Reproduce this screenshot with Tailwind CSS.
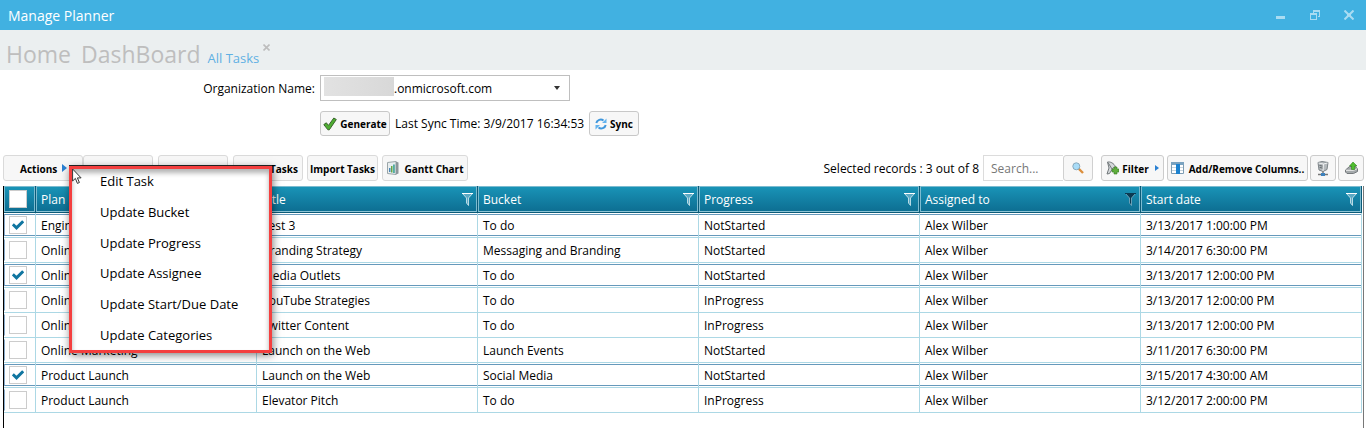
<!DOCTYPE html>
<html lang="en">
<head>
<meta charset="utf-8">
<title>Manage Planner</title>
<script src="https://cdn.jsdelivr.net/npm/@tailwindcss/browser@4"></script>
</head>
<body class="min-h-screen flex flex-col bg-white font-['Open_Sans','Noto_Sans',sans-serif] text-[12px] leading-4 text-black overflow-hidden">
<header class="h-[30px] shrink-0 bg-[#41b1e1] flex items-center justify-between pl-2 pr-3">
  <h1 class="text-[14px] leading-5 text-white pt-px">Manage Planner</h1>
  <div class="flex gap-6 text-[#a9dcf2]">
    <button type="button" aria-label="Minimize" class="size-[10px]"><svg class="size-[10px]" viewBox="0 0 10 10" fill="currentColor" shape-rendering="crispEdges"><path d="M0 6h9v3H0z"/></svg></button>
    <button type="button" aria-label="Restore" class="size-[10px]"><svg class="size-[10px]" viewBox="0 0 10 10" fill="currentColor" fill-rule="evenodd" shape-rendering="crispEdges"><path d="M0 3h7v7H0zM1 5v4h5V5zM3 0h7v7H8V6h1V2H4v1H3z"/></svg></button>
    <button type="button" aria-label="Close" class="size-[10px]"><svg class="size-[10px]" viewBox="0 0 10 10" stroke="currentColor" stroke-width="2"><path d="M.5.5l9 9M9.500.5l-9 9"/><path d="M3 5h4" stroke-width="3"/></svg></button>
  </div>
</header>
<nav class="h-10 shrink-0 bg-[#ebeff0] flex items-baseline px-[6px] pt-[7px] text-[#bebebe]">
  <a href="#" class="text-[23px] leading-[34px] mr-[10px]">Home</a>
  <a href="#" class="text-[23px] leading-[34px] mr-[7px]">DashBoard</a>
  <a href="#" class="text-[13px] text-[#5fb0e3]">All Tasks</a>
  <button type="button" aria-label="Close tab" class="self-start ml-1 mt-[7px] size-[7px]"><svg class="size-[7px]" viewBox="0 0 7 7" stroke="#bdbdbd" stroke-width="1.600"><path d="M.5.5l6 6M6.500.5l-6 6"/></svg></button>
</nav>
<main class="flex-1 flex flex-col">
  <form class="pl-[320px] pt-[5px]">
    <div class="flex items-center">
      <label for="org" class="w-[320px] -ml-[320px] pr-[5px] pt-[2px] text-right">Organization Name:</label>
      <div class="relative w-[250px]">
        <select id="org" class="appearance-none block w-full h-[26px] border border-[#bfbfbf] bg-white pt-[2px] pl-[73px] text-[12px]"><option>.onmicrosoft.com</option></select>
        <span class="absolute left-1 top-[2px] w-[70px] h-[19px] bg-linear-to-r from-[#e2e2e2] to-[#d8d8d8]"></span>
        <svg class="absolute right-[10px] top-[11px] w-[6px] h-[4px] pointer-events-none" viewBox="0 0 6 4" fill="#333"><path d="M0 0h6L3 4z"/></svg>
      </div>
    </div>
    <div class="flex items-center mt-[10px]">
      <button type="button" class="h-[25px] w-[70px] border border-[#c8c8c8] rounded-[3px] bg-[#f7f7f7] flex items-center justify-center gap-[3px] font-bold text-[10px]">
        <svg class="size-[14px] shrink-0" viewBox="0 0 14 14"><path d="M.8 7.600L3.300 5.800l2.200 2.600L10.800 1l2.500 1.500-7 10.300H4.900z" fill="#4fae32" stroke="#39642c" stroke-width="1"/></svg><span class="pt-px">Generate</span></button>
      <span class="w-[189px] mx-[5px] pt-px whitespace-nowrap">Last Sync Time: 3/9/2017 16:34:53</span>
      <button type="button" class="h-[25px] w-[50px] border border-[#c8c8c8] rounded-[3px] bg-[#f7f7f7] flex items-center justify-center gap-[3px] font-bold text-[10px]">
        <svg class="size-3 shrink-0" viewBox="0 0 12 12" fill="none" stroke="#3f97dd" stroke-width="2"><path d="M1.300 5A4.500 4.300 0 0 1 8.500 2.500"/><path d="M10.700 7A4.500 4.300 0 0 1 3.500 9.500"/><path d="M11.500.5v4.500H7z M.5 11.500V7H5z" fill="#63b3ee" stroke="none"/></svg><span class="pt-px">Sync</span></button>
    </div>
  </form>
  <section class="relative flex-1 flex flex-col mt-[19px]">
    <div class="flex items-center h-[26px] pl-[3px] pr-[2px] font-bold text-[10px]">
      <button type="button" aria-haspopup="menu" class="h-[26px] w-[80px] border border-[#dadada] rounded-[3px] bg-[#f7f7f7] flex items-center pl-4 gap-[5px]"><span class="pt-px">Actions</span><svg class="w-[5px] h-[8px]" viewBox="0 0 5 8" fill="#2a80d2"><path d="M0 0l5 4-5 4z"/></svg></button>
      <button type="button" aria-label="Add" class="h-[26px] w-[70px] border border-[#dadada] rounded-[3px] bg-[#f7f7f7]"></button>
      <button type="button" aria-label="Refresh" class="h-[26px] w-[70px] ml-[5px] border border-[#dadada] rounded-[3px] bg-[#f7f7f7]"></button>
      <button type="button" class="h-[26px] w-[70px] ml-[5px] border border-[#dadada] rounded-[3px] bg-[#f7f7f7] pt-px pr-1 text-right whitespace-nowrap">Export Tasks</button>
      <button type="button" class="h-[26px] w-[71px] ml-1 border border-[#dadada] rounded-[3px] bg-[#f7f7f7] pt-px whitespace-nowrap">Import Tasks</button>
      <button type="button" class="h-[26px] w-[86px] ml-1 border border-[#dadada] rounded-[3px] bg-[#f7f7f7] flex items-center justify-center gap-[6px] whitespace-nowrap">
        <svg class="w-3 h-[14px] shrink-0" viewBox="0 0 12 14"><path d="M.5 1.500L9 .5v13l-8.500-1z" fill="#e8eef0" stroke="#9aa5a8"/><path d="M9 .5l2.500 1v11L9 13.500z" fill="#8b9599"/><path d="M2 7h1.500v4H2z" fill="#4b87b8"/><path d="M4 5h1.500v6.500H4z" fill="#6aa544"/><path d="M6.200 3.500h1.500V12H6.200z" fill="#2f9b90"/></svg><span class="pt-px">Gantt Chart</span></button>
      <div class="ml-auto flex items-center">
        <span class="font-normal text-[12px] pt-px mr-1 whitespace-nowrap">Selected records : 3 out of 8</span>
        <input type="search" aria-label="Search" placeholder="Search..." class="h-[26px] w-[80px] border border-r-0 border-[#dcdcdc] px-[7px] font-normal text-[12px] placeholder:text-[#777]">
        <button type="button" aria-label="Search" class="h-[26px] w-[30px] border border-[#d0d0d0] rounded-[3px] bg-[#f7f7f7] flex items-center justify-center"><svg class="size-3" viewBox="0 0 12 12"><path d="M6.500 6.500l4.500 4.500" stroke="#dc8f3c" stroke-width="2.400"/><circle cx="4.300" cy="4.300" r="3.500" fill="#a8dcf8" stroke="#8aa9bc"/></svg></button>
        <button type="button" class="ml-2 h-[26px] w-[63px] border border-[#ccc] rounded-[3px] bg-[#f7f7f7] flex items-center justify-center gap-[3px]">
          <svg class="w-[13px] h-[14px] shrink-0" viewBox="0 0 13 14"><path d="M1.500 1C4 .5 8 2 9.500 6L7 7 3.500 12.500 1 13l2-6z" fill="#d4d8da" stroke="#71777a"/><path d="M2 1.500l4 6.500" stroke="#73797c"/><path d="M8 6h3v2h2v3h-2v2H8v-2H6V8h2z" fill="#5fae3c" stroke="#3b7c25" stroke-width=".6"/></svg><span class="pt-px">Filter</span><svg class="w-[4px] h-[6px] ml-[3px]" viewBox="0 0 4 6" fill="#2a80d2"><path d="M0 0l4 3-4 3z"/></svg></button>
        <button type="button" class="ml-[3px] h-[26px] w-[141px] border border-[#ccc] rounded-[3px] bg-[#f7f7f7] flex items-center justify-center gap-[5px] whitespace-nowrap">
          <svg class="w-[13px] h-3 shrink-0" viewBox="0 0 13 12"><path d="M.5.5h12v11H.5z" fill="#fff" stroke="#7e9db4"/><path d="M0 0h13v3H0z" fill="#7ba3c0"/><path d="M5 2h4v10H5z" fill="#1d82cf"/><path d="M1 5.500h4M9 5.500h3M1 8.500h4M9 8.500h3" stroke="#c7d4dc"/></svg><span class="pt-px">Add/Remove Columns..</span></button>
        <button type="button" aria-label="Server" class="ml-[2px] h-[26px] w-[26px] border border-[#ccc] rounded-[3px] bg-[#f7f7f7] flex items-center justify-center"><svg class="w-3 h-[15px]" viewBox="0 0 12 15"><path d="M1 1.500L5 .5l6 1-1 7-4 2L2 9z" fill="#b4b9bc" stroke="#7d8488"/><path d="M1.500 2l5 1L10.500 2M6.500 3L6 10" stroke="#eef0f1" fill="none"/><path d="M2.500 4.500l3 .6M2.700 6.500l2.800.6" stroke="#5d6468"/><path d="M6 10.500V13M1 13.500h10" stroke="#777" stroke-width="1.500"/><path d="M4 12h4v3H4z" fill="#3e82bd"/></svg></button>
        <button type="button" aria-label="Export" class="ml-[2px] h-[26px] w-[26px] border border-[#ccc] rounded-[3px] bg-[#f7f7f7] flex items-center justify-center"><svg class="w-[13px] h-3" viewBox="0 0 13 12"><path d="M.5 8l4-3.500h6L12.500 7v2.500L8.500 11.500H2L.5 10z" fill="#a3a8aa" stroke="#75797c"/><path d="M1 8.300h7.500l3.500-1.500" stroke="#eee" fill="none"/><path d="M8 0l4 4H9.800v3.500H6.500V4H4.500z" fill="#4fbe2e" stroke="#2f8620" stroke-width=".6"/></svg></button>
      </div>
    </div>
    <div class="flex-1 mt-[5px] ml-[3px] mr-[2px] border-l border-l-black border-r border-r-[#777] pr-px">
      <table class="w-full table-fixed border-separate border-spacing-0">
        <colgroup><col class="w-8"><col><col><col><col><col><col></colgroup>
        <thead><tr id="head"></tr></thead>
        <tbody id="rows"></tbody>
      </table>
    </div>
    <div role="menu" class="absolute left-[69px] top-[11px] w-[203px] h-[187px] border-3 border-[#f43f3f] bg-white flex flex-col text-[13px] shadow-[0_-1px_0_#222,1px_2px_8px_rgba(0,0,0,.5),inset_0_4px_5px_rgba(0,0,0,.3)]">
      <div role="none" class="flex-1 flex flex-col -mt-[3px]">
        <button role="menuitem" type="button" class="flex-1 pl-7 text-left">Edit Task</button>
        <button role="menuitem" type="button" class="flex-1 pl-7 text-left">Update Bucket</button>
        <button role="menuitem" type="button" class="flex-1 pl-7 text-left">Update Progress</button>
        <button role="menuitem" type="button" class="flex-1 pl-7 text-left">Update Assignee</button>
        <button role="menuitem" type="button" class="flex-1 pl-7 text-left">Update Start/Due Date</button>
        <button role="menuitem" type="button" class="flex-1 pl-7 text-left">Update Categories</button>
      </div>
    </div>
    <svg class="absolute left-[72px] top-[13px] w-[10px] h-[17px] pointer-events-none" viewBox="0 0 10 17"><path d="M.6 1v12l2.800-2.600 2 5 2-.9-2-4.600h3.700z" fill="#fff" stroke="#333"/></svg>
  </section>
</main>
<script>
const cols = ['Plan', 'Title', 'Bucket', 'Progress', 'Assigned to', 'Start date'];
const data = [
  [1, 'Engineering', 'Test 3', 'To do', 'NotStarted', '3/13/2017 1:00:00 PM'],
  [0, 'Online Marketing', 'Branding Strategy', 'Messaging and Branding', 'NotStarted', '3/14/2017 6:30:00 PM'],
  [1, 'Online Marketing', 'Media Outlets', 'To do', 'NotStarted', '3/13/2017 12:00:00 PM'],
  [0, 'Online Marketing', 'YouTube Strategies', 'To do', 'InProgress', '3/13/2017 12:00:00 PM'],
  [0, 'Online Marketing', 'Twitter Content', 'To do', 'InProgress', '3/13/2017 12:00:00 PM'],
  [0, 'Online Marketing', 'Launch on the Web', 'Launch Events', 'NotStarted', '3/11/2017 6:30:00 PM'],
  [1, 'Product Launch', 'Launch on the Web', 'Social Media', 'NotStarted', '3/15/2017 4:30:00 AM'],
  [0, 'Product Launch', 'Elevator Pitch', 'To do', 'InProgress', '3/12/2017 2:00:00 PM']
];
const th = 'h-[27px] p-0 border-r border-b border-[#0b5b78] bg-linear-to-b from-[#1a95b8] to-[#0d6d91] font-normal text-white text-left';
const inner = 'h-[26px] border border-[#7cbbd0] border-b-[#8cc4d6] flex items-center';
const funnel = active => `<svg class="w-[11px] h-[13px]" viewBox="0 0 11 13"><path d="M.5.5h10L6.500 5v7.500L4.500 10V5z" fill="${active ? '#0b3a52' : '#5ba9c4'}" stroke="${active ? '#7fb0c4' : '#d8ecf3'}" stroke-width=".8"/><path d="M0 .5h11" stroke="${active ? '#0b3a52' : '#fff'}"/></svg>`;
document.getElementById('head').innerHTML =
  `<th class="${th}"><div class="${inner} pl-1"><input type="checkbox" aria-label="Select all" class="appearance-none size-[18px] bg-white border border-[#ccc]"></div></th>` +
  cols.map((c, i) => `<th scope="col" class="${th}"><div class="${inner} justify-between pl-1 pr-[3px]"><span class="pt-[2px]">${c}</span><button type="button" aria-label="Filter ${c}">${funnel(i === 4)}</button></div></th>`).join('');
document.getElementById('rows').innerHTML = data.map(r => {
  const cell = 'h-[22px] my-px border-y flex items-center ' + (r[0] ? 'border-[#6699bb]' : 'border-transparent');
  const td = 'p-0 border-r border-b border-[#acd8e5]';
  const tick = r[0] ? '<svg class="absolute left-[3px] top-1 w-3 h-[10px] pointer-events-none" viewBox="0 0 12 10"><path d="M.8 4.300l3.700 3.500L11.200 1.200" fill="none" stroke="#0f75a0" stroke-width="3"/></svg>' : '';
  return `<tr><td class="${td}"><div class="${cell} pl-1 border-l border-l-[#8aabcb]"><span class="relative flex"><input type="checkbox" aria-label="Select ${r[2]}" ${r[0] ? 'checked' : ''} class="appearance-none size-[18px] bg-white border border-[#ccc]">${tick}</span></div></td>` +
    [r[1], r[2], r[3], r[4], 'Alex Wilber', r[5]].map(t => `<td class="${td}"><div class="${cell} pl-[5px] pt-[2px] whitespace-nowrap">${t}</div></td>`).join('') + '</tr>';
}).join('');
</script>
</body>
</html>
